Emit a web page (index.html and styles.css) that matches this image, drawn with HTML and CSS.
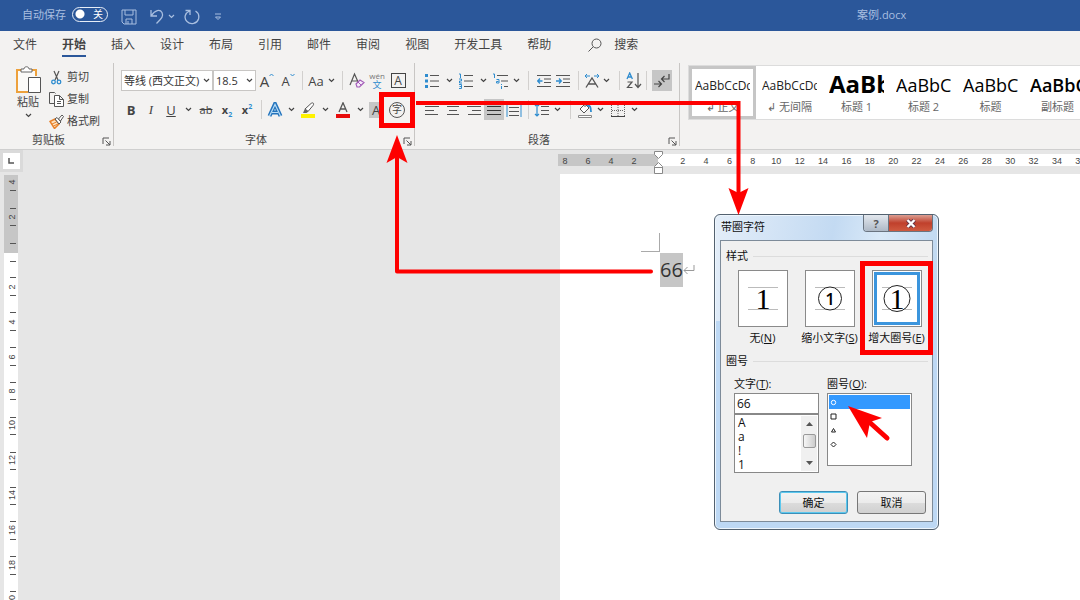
FILE: index.html
```html
<!DOCTYPE html>
<html lang="zh-CN">
<head>
<meta charset="utf-8">
<title>案例.docx</title>
<link rel="stylesheet" href="styles.css">
</head>
<body>
<svg class="defs" aria-hidden="true">
  <symbol id="chev" viewBox="0 0 7 5"><path d="M1 1l2.500 2.500L6 1" fill="none" stroke="currentColor" stroke-width="1.200"/></symbol>
  <symbol id="launch" viewBox="0 0 9 9"><path d="M1 7V1h6M3.500 3.500L8 8M8 4v4H4" fill="none" stroke="#555"/></symbol>
</svg>
<div class="app">
  <header class="titlebar">
    <label class="autosave">自动保存
      <span class="toggle"><input type="checkbox" aria-label="自动保存"><span class="toggle-text">关</span></span>
    </label>
    <button class="qa" aria-label="保存"><svg width="16" height="16" viewBox="0 0 16 16"><path d="M1 1h14v14H3l-2-2zM4 1v5h8V1M5 15v-5h6v5M7 12v3" fill="none" stroke="currentColor"/></svg></button>
    <button class="qa undo" aria-label="撤消"><svg width="15" height="16" viewBox="0 0 15 16"><path d="M1 1v6h6M1.500 6.500C5 1 10 0 12 3.500c2 4-1 6.500-5.500 11" fill="none" stroke="currentColor" stroke-width="1.300"/></svg></button>
    <svg class="chev" width="7" height="5"><use href="#chev"/></svg>
    <button class="qa redo" aria-label="重做"><svg width="16" height="16" viewBox="0 0 16 16"><path d="M1.500 1.500h4.500v4.500M5.500 2C1 4-.5 9 3 12.500c4 4 10 2 11.500-2.500 1-4-.5-6.500-3-8" fill="none" stroke="currentColor" stroke-width="1.300"/></svg></button>
    <button class="qa more" aria-label="自定义"><svg width="8" height="8" viewBox="0 0 8 8"><path d="M1 1h6M1.500 4L4 6.500 6.500 4z" fill="none" stroke="currentColor"/></svg></button>
    <h1 class="doc-title">案例.docx</h1>
  </header>

  <nav class="tabs">
    <a href="#">文件</a><a href="#" class="active">开始</a><a href="#">插入</a><a href="#">设计</a><a href="#">布局</a><a href="#">引用</a><a href="#">邮件</a><a href="#">审阅</a><a href="#">视图</a><a href="#">开发工具</a><a href="#">帮助</a>
    <a href="#" class="search"><svg width="14" height="14" viewBox="0 0 14 14"><circle cx="8.500" cy="5.500" r="4.500" fill="none" stroke="#555"/><path d="M5.300 8.700L.5 13.500" stroke="#555"/></svg>搜索</a>
  </nav>

  <div class="ribbon">
    <section class="group clipboard">
      <div class="clip-body">
        <button class="paste">
          <svg width="27" height="28" viewBox="0 0 27 28"><path d="M6 4H2v22h11M17 4h4v6" fill="none" stroke="#eda13c" stroke-width="2"/><path d="M3 5h17v6h-7v14H3z" fill="#fbfaf8"/><path d="M6 6V3h3c0-3 5-3 5 0h3v3z" fill="#fff" stroke="#666"/><path d="M13.500 11.500h12v15h-12z" fill="#fff" stroke="#555"/></svg>
          <span>粘贴</span>
          <svg class="chev" width="7" height="5"><use href="#chev"/></svg>
        </button>
        <div class="clip-list">
          <button><svg width="15" height="15" viewBox="0 0 15 15"><path d="M5 1l4 9M10 1L6 10" stroke="#555" stroke-width="1.200"/><circle cx="4.500" cy="12" r="1.800" fill="none" stroke="#2e8ccf" stroke-width="1.300"/><circle cx="10" cy="12" r="1.800" fill="none" stroke="#2e8ccf" stroke-width="1.300"/></svg>剪切</button>
          <button><svg width="15" height="15" viewBox="0 0 15 15"><path d="M5 11.500H.5v-11h5l1 1" fill="none" stroke="#555"/><path d="M5.500 3.500h5l4 4v7h-9zM10.500 3.500v4h4M8 9.500h4M8 11.500h4" fill="#fff" stroke="#555"/></svg>复制</button>
          <button><svg width="15" height="15" viewBox="0 0 15 15"><path d="M1 7.500l5-2.500 4 5-4.500 4.500z" fill="#fde2c2" stroke="#e8822a" stroke-width="1.500"/><path d="M3 10l4.500-2M4.500 12l4.500-2" stroke="#e8822a"/><path d="M6 5l2-1.500 4 4.500-2 2z" fill="#fff" stroke="#555"/><path d="M9.500 5l3.500-4 1.500 1.500L11.500 7z" fill="#fff" stroke="#555"/></svg>格式刷</button>
        </div>
      </div>
      <footer><span>剪贴板</span><button class="launch" aria-label="剪贴板设置"><svg width="9" height="9"><use href="#launch"/></svg></button></footer>
    </section>

    <section class="group font">
      <div class="row">
        <span class="combo w92"><select aria-label="字体"><option>等线 (西文正文)</option></select><svg width="7" height="5"><use href="#chev"/></svg></span>
        <span class="combo w43"><select aria-label="字号"><option>18.5</option></select><svg width="7" height="5"><use href="#chev"/></svg></span>
        <button class="w22" aria-label="增大字号"><span class="glyph big">A</span><svg class="hat" width="5" height="4" viewBox="0 0 5 4"><path d="M.5 3l2-2 2 2" fill="none" stroke="#2e8ccf"/></svg></button>
        <button class="w20" aria-label="减小字号"><span class="glyph">A</span><svg class="hat" width="5" height="4" viewBox="0 0 5 4"><path d="M.5 1l2 2 2-2" fill="none" stroke="#2e8ccf"/></svg></button>
        <i class="sep w8"></i>
        <button class="w20"><span class="glyph">Aa</span></button>
        <button class="w10" aria-label="更改大小写"><svg width="7" height="5"><use href="#chev"/></svg></button>
        <i class="sep w12"></i>
        <button class="w18" aria-label="清除格式"><svg width="16" height="17" viewBox="0 0 16 17"><path d="M1 13L5.500 2 10 12M2.500 9h6" fill="none" stroke="#555" stroke-width="1.200"/><path d="M7 12l4-4 4 2.500-4.500 4.500H8z" fill="#f7ecfa" stroke="#a25cb8" stroke-width="1.200"/><path d="M9 10l3 3" stroke="#a25cb8"/></svg></button>
        <button class="w22 pinyin"><span>wén</span><b>文</b></button>
        <button class="w20"><span class="boxed">A</span></button>
      </div>
      <div class="row">
        <button class="w20"><b class="glyph">B</b></button>
        <button class="w20"><em class="glyph">I</em></button>
        <button class="w20"><u class="glyph">U</u></button>
        <button class="w14" aria-label="下划线样式"><svg width="7" height="5"><use href="#chev"/></svg></button>
        <button class="w22"><s class="glyph small">ab</s></button>
        <button class="w20"><b class="glyph small">x<sub>2</sub></b></button>
        <button class="w20"><b class="glyph small">x<sup>2</sup></b></button>
        <i class="sep w8"></i>
        <button class="w20" aria-label="文本效果"><svg width="16" height="16" viewBox="0 0 16 16"><path d="M2.500 14L8 2l5.500 12M5 10.500h6" fill="none" stroke="#2474bd" stroke-width="4"/><path d="M2.500 14L8 2.500 13.500 14M5 10.500h6" fill="none" stroke="#b9dcf5" stroke-width="1.200"/></svg></button>
        <button class="w12" aria-label="更多文本效果"><svg width="7" height="5"><use href="#chev"/></svg></button>
        <button class="w22" aria-label="突出显示"><svg width="16" height="16" viewBox="0 0 16 16"><path d="M1 12h14v4H1z" fill="#fff200"/><path d="M5 7l6-5.500c2-1.500 3.500 0 2 2L8 9.500z" fill="#fff" stroke="#555"/><path d="M3 11l2-4.500L8.500 9.500 6.500 11z" fill="#666"/></svg></button>
        <button class="w12" aria-label="突出显示颜色"><svg width="7" height="5"><use href="#chev"/></svg></button>
        <button class="w24" aria-label="字体颜色"><svg width="16" height="16" viewBox="0 0 16 16"><path d="M1 12h14v4H1z" fill="#e80c0c"/><path d="M4 10L8 .8 12 10M5.500 7h5" fill="none" stroke="#555" stroke-width="1.300"/></svg></button>
        <button class="w10" aria-label="更多颜色"><svg width="7" height="5"><use href="#chev"/></svg></button>
        <button class="w22"><span class="shade">A</span></button>
        <button class="w20"><span class="ring">字</span></button>
      </div>
      <footer><span>字体</span><button class="launch" aria-label="字体设置"><svg width="9" height="9"><use href="#launch"/></svg></button></footer>
    </section>

    <section class="group para">
      <div class="row">
        <button class="w20" aria-label="项目符号"><svg width="16" height="16" viewBox="0 0 16 16"><path d="M1 1h3v3H1zM1 6.500h3v3H1zM1 12h3v3H1z" fill="#2e8ccf"/><path d="M6 2.500h9M6 8h9M6 13.500h9" stroke="#555"/></svg></button>
        <button class="w14" aria-label="项目符号库"><svg width="7" height="5"><use href="#chev"/></svg></button>
        <button class="w20" aria-label="编号"><svg width="16" height="16" viewBox="0 0 16 16"><path d="M1 1h1.500v4M1 6h2.500v2H1.500v2h2.500M1 11.500h2.500v4H1M1.500 13.500h2" fill="none" stroke="#2e8ccf"/><path d="M6 2.500h9M6 8h9M6 13.500h9" stroke="#555"/></svg></button>
        <button class="w14" aria-label="编号库"><svg width="7" height="5"><use href="#chev"/></svg></button>
        <button class="w22" aria-label="多级列表"><svg width="16" height="16" viewBox="0 0 16 16"><path d="M0 1h1.500v4M3.500 6.500h2.500v3.500H3.500V8.500h2M8.500 11v1M8.500 13v3" fill="none" stroke="#2e8ccf"/><path d="M4 2.500h11M8 8h7M11 13.500h4" stroke="#555"/></svg></button>
        <button class="w8" aria-label="列表库"><svg width="7" height="5"><use href="#chev"/></svg></button>
        <i class="sep w16"></i>
        <button class="w16" aria-label="减少缩进"><svg width="14" height="14" viewBox="0 0 14 14"><path d="M0 1.500h14M7 5h7M7 8.500h7M0 12.500h14" stroke="#555"/><path d="M5.500 7H1M3 4.500L.7 7 3 9.500" fill="none" stroke="#2e8ccf" stroke-width="1.300"/></svg></button>
        <button class="w22" aria-label="增加缩进"><svg width="14" height="14" viewBox="0 0 14 14"><path d="M0 1.500h14M7 5h7M7 8.500h7M0 12.500h14" stroke="#555"/><path d="M0 7h4.500M3 4.500L5.300 7 3 9.500" fill="none" stroke="#2e8ccf" stroke-width="1.300"/></svg></button>
        <i class="sep w8"></i>
        <button class="w20" aria-label="中文版式"><svg width="16" height="16" viewBox="0 0 16 16"><path d="M2 14.500L8 5l6 9.500M4.500 11h7" fill="none" stroke="#555" stroke-width="1.300"/><path d="M6 3H1M3 1L1 3l2 2M10 3h5M13 1l2 2-2 2" fill="none" stroke="#2e8ccf"/></svg></button>
        <button class="w8" aria-label="更多版式"><svg width="7" height="5"><use href="#chev"/></svg></button>
        <i class="sep w18"></i>
        <button class="w12" aria-label="排序"><svg width="16" height="17" viewBox="0 0 16 17"><path d="M1 7l2.700-6 2.700 6M2 5h3.500" fill="none" stroke="#2e8ccf" stroke-width="1.300"/><path d="M1.500 10h4.500L1.500 15.500h5M12 1v14M9 12l3 3.500 3-3.500" fill="none" stroke="#555" stroke-width="1.200"/></svg></button>
        <i class="sep w12"></i>
        <button class="w20 on" aria-label="显示编辑标记"><svg width="16" height="16" viewBox="0 0 16 16"><path d="M15 1v5H8M10.500 3L7.500 6l3 3M0 11h7M4.500 8l3 3-3 3" fill="none" stroke="#444" stroke-width="1.200"/></svg></button>
      </div>
      <div class="row">
        <button class="w20" aria-label="左对齐"><svg width="14" height="14" viewBox="0 0 14 14"><path d="M0 3.500h14M0 7.500h9M0 11.500h13" stroke="#555"/></svg></button>
        <button class="w22" aria-label="居中"><svg width="14" height="14" viewBox="0 0 14 14"><path d="M1 3.500h12M3 7.500h8M1 11.500h12" stroke="#555"/></svg></button>
        <button class="w20" aria-label="右对齐"><svg width="14" height="14" viewBox="0 0 14 14"><path d="M0 3.500h14M5 7.500h9M1 11.500h13" stroke="#555"/></svg></button>
        <button class="w20 on" aria-label="两端对齐"><svg width="14" height="14" viewBox="0 0 14 14"><path d="M0 3.500h14M0 7.500h14M0 11.500h14" stroke="#333"/></svg></button>
        <button class="w20" aria-label="分散对齐"><svg width="16" height="14" viewBox="0 0 16 14"><path d="M1 0v14M15 0v14" stroke="#2e8ccf"/><path d="M3 4.500h10M3 8.500h10M3 12.500h10M3 1.500h10" stroke="#555"/></svg></button>
        <i class="sep w8"></i>
        <button class="w20" aria-label="行距"><svg width="16" height="14" viewBox="0 0 16 14"><path d="M3 1v12M1 3l2-2 2 2M1 11l2 2 2-2" fill="none" stroke="#2e8ccf" stroke-width="1.200"/><path d="M7 3.500h8M7 7.500h8M7 11.500h8" stroke="#555"/></svg></button>
        <button class="w10" aria-label="行距选项"><svg width="7" height="5"><use href="#chev"/></svg></button>
        <i class="sep w16"></i>
        <button class="w14" aria-label="底纹"><svg width="16" height="16" viewBox="0 0 16 16"><path d="M1.500 13.500h13v2h-13z" fill="#fff" stroke="#888"/><path d="M3 7l5-5 4 4-5 5z" fill="#fff" stroke="#555"/><path d="M8 5V1" stroke="#555"/><path d="M10 4c3-1 4 1 4 6" fill="none" stroke="#2e8ccf" stroke-width="1.800"/></svg></button>
        <button class="w16" aria-label="底纹颜色"><svg width="7" height="5"><use href="#chev"/></svg></button>
        <button class="w20" aria-label="边框"><svg width="14" height="14" viewBox="0 0 14 14"><path d="M.5 0v13M13.500 0v13M0 1.500h14M7 0v13M1 7.500h12" stroke="#666" stroke-dasharray="1 1"/><path d="M0 13.500h14" stroke="#444"/></svg></button>
        <button class="w12" aria-label="边框选项"><svg width="7" height="5"><use href="#chev"/></svg></button>
      </div>
      <footer><span>段落</span><button class="launch" aria-label="段落设置"><svg width="9" height="9"><use href="#launch"/></svg></button></footer>
    </section>

    <section class="gallery">
      <button class="style selected"><span class="sample">AaBbCcDd</span><span class="name">↲ 正文</span></button>
      <button class="style"><span class="sample">AaBbCcDd</span><span class="name">↲ 无间隔</span></button>
      <button class="style"><span class="sample h1">AaBb</span><span class="name">标题 1</span></button>
      <button class="style"><span class="sample h2">AaBbC</span><span class="name">标题 2</span></button>
      <button class="style"><span class="sample h2">AaBbC</span><span class="name">标题</span></button>
      <button class="style"><span class="sample h2 strong">AaBbC</span><span class="name">副标题</span></button>
    </section>
  </div>

  <main class="workspace">
    <div class="left-rail">
      <button class="tabstop" aria-label="制表符"><svg width="7" height="6" viewBox="0 0 7 6"><path d="M1 0v5h5" fill="none" stroke="#555" stroke-width="1.500"/></svg></button>
      <svg class="vruler" width="14" height="426" viewBox="4 175 14 426">
        <path d="M4 175h14v426H4z" fill="#fff"/><path d="M4 175h14v78H4z" fill="#c6c6c6"/>
        <path d="M10 190.500h6M10 208.500h6M10 225.500h6M10 243.500h6M10 261.500h6M10 277.500h6M10 295.500h6M10 312.500h6M10 330.500h6M10 347.500h6M10 365.500h6M10 382.500h6M10 399.500h6M10 417.500h6M10 434.500h6M10 452.500h6M10 469.500h6M10 487.500h6M10 504.500h6M10 521.500h6M10 539.500h6M10 556.500h6M10 574.500h6M10 591.500h6" stroke="#555"/>
        <g class="vnum">
          <text transform="translate(15 182) rotate(-90)">4</text><text transform="translate(15 217) rotate(-90)">2</text><text transform="translate(15 287) rotate(-90)">2</text><text transform="translate(15 322) rotate(-90)">4</text><text transform="translate(15 357) rotate(-90)">6</text><text transform="translate(15 391) rotate(-90)">8</text><text transform="translate(15 425) rotate(-90)">10</text><text transform="translate(15 460) rotate(-90)">12</text><text transform="translate(15 495) rotate(-90)">14</text><text transform="translate(15 530) rotate(-90)">16</text><text transform="translate(15 565) rotate(-90)">18</text><text transform="translate(15 600) rotate(-90)">20</text>
        </g>
      </svg>
    </div>
    <div class="canvas">
      <div class="hruler">
        <ol class="neg"><li>8</li><li>6</li><li>4</li><li>2</li></ol>
        <ol class="pos"><li>2</li><li>4</li><li>6</li><li>8</li><li>10</li><li>12</li><li>14</li><li>16</li><li>18</li><li>20</li><li>22</li><li>24</li><li>26</li><li>28</li><li>30</li><li>32</li><li>34</li><li>36</li></ol>
        <svg class="indent" width="9" height="24" viewBox="0 0 9 24"><path d="M.5.500h8v3l-4 4-4-4zM4.500 11.500l4 4v7h-8v-7zM.5 16.500h8" fill="#fff" stroke="#888"/></svg>
      </div>
      <article class="page">
        <p><span class="sel">66</span><svg width="12" height="12" viewBox="0 0 12 12"><path d="M11 1v5.500H1M4.500 3L1 6.500 4.500 10" fill="none" stroke="#999"/></svg></p>
        <svg class="crop" width="20" height="20" viewBox="0 0 20 20"><path d="M18.500 0v19M0 18.500h19" stroke="#aaa"/></svg>
      </article>
    </div>
  </main>

  <div class="dialog" role="dialog" aria-labelledby="dlg-title">
    <div class="dlg-bar"><h2 id="dlg-title">带圈字符</h2><div class="dlg-ctl"><button class="help">?</button><button class="close" aria-label="关闭"><svg width="12" height="9" viewBox="0 0 12 9"><path d="M2.500 1l7 7M9.500 1l-7 7" stroke="#634" stroke-width="4"/><path d="M2.500 1l7 7M9.500 1l-7 7" stroke="#fff" stroke-width="2.400"/></svg></button></div></div>
    <form class="dlg-body">
      <div class="head">样式</div>
      <div class="choices">
        <label><input type="radio" name="st"><span class="tile"><svg width="48" height="55" viewBox="0 0 48 55"><path d="M9 16.500h30M9 38.500h30" stroke="#bbb"/><text x="24" y="38" class="one serif">1</text></svg></span><span>无(<u>N</u>)</span></label>
        <label><input type="radio" name="st"><span class="tile"><svg width="48" height="55" viewBox="0 0 48 55"><path d="M9 16.500h30M9 38.500h30" stroke="#bbb"/><circle cx="24" cy="27.500" r="11.500" fill="#fff" stroke="#222"/><text x="24" y="34" class="one mid">1</text></svg></span><span>缩小文字(<u>S</u>)</span></label>
        <label><input type="radio" name="st" checked><span class="tile"><svg width="48" height="55" viewBox="0 0 48 55"><path d="M9 16.500h30M9 38.500h30" stroke="#bbb"/><circle cx="24" cy="27.500" r="13" fill="#fff" stroke="#222"/><text x="24" y="38" class="one serif">1</text></svg></span><span>增大圈号(<u>E</u>)</span></label>
      </div>
      <div class="head">圈号</div>
      <div class="lists">
        <div class="col">
          <label for="chars">文字(<u>T</u>):</label>
          <input id="chars" type="text" value="66">
          <div class="listwrap">
            <ul role="listbox" aria-label="文字"><li>A</li><li>a</li><li>!</li><li>1</li></ul>
            <div class="scroll"><svg width="7" height="4" viewBox="0 0 7 4"><path d="M0 4l3.500-4L7 4z" fill="#555"/></svg><span class="thumb"></span><svg width="7" height="4" viewBox="0 0 7 4"><path d="M0 0l3.500 4L7 0z" fill="#555"/></svg></div>
          </div>
        </div>
        <div class="col">
          <span id="ringlabel">圈号(<u>O</u>):</span>
          <ul class="rings" role="listbox" aria-labelledby="ringlabel">
            <li class="cur"><svg width="7" height="7" viewBox="0 0 7 7"><circle cx="3.500" cy="3.500" r="2.200"/></svg></li>
            <li><svg width="7" height="7" viewBox="0 0 7 7"><path d="M1 1h5v5H1z"/></svg></li>
            <li><svg width="7" height="7" viewBox="0 0 7 7"><path d="M3.500 1.500l2 3.500h-4z"/></svg></li>
            <li><svg width="7" height="7" viewBox="0 0 7 7"><path d="M3.500 1L6 3.500 3.500 6 1 3.500z"/></svg></li>
          </ul>
        </div>
      </div>
      <div class="actions"><button type="button" class="default">确定</button><button type="button">取消</button></div>
    </form>
  </div>

  <svg class="marks" width="1080" height="600" viewBox="0 0 1080 600" aria-hidden="true">
    <g fill="none" stroke="#fe0000" stroke-width="4">
      <path d="M381.500 94.500h31v31h-31z" stroke-width="5"/>
      <path d="M862.500 263.500h68v89h-68z" stroke-width="5"/>
      <path d="M416 103h322.500v90"/>
      <path d="M651 271.500H397V158" stroke-linecap="round" stroke-linejoin="round"/>
      <path d="M887 438l-20-18" stroke-width="5" stroke-linecap="round"/>
    </g>
    <path d="M738.500 215l-10-27 10 5 10-5zM397 135l-10.500 28L397 157l10.500 6zM848 406l34 12-12 4-3 16z" fill="#fe0000"/>
  </svg>
</div>
</body>
</html>
```
FILE: styles.css
```css
* { box-sizing: border-box; }
body { margin: 0; background: #e6e6e6; color: #444; font: 11px/14px "Open Sans", "Noto Sans CJK SC", sans-serif; }
button, input, select { font: inherit; color: inherit; margin: 0; padding: 0; }
button { background: none; border: 0; white-space: nowrap; }
ul, ol { list-style: none; margin: 0; padding: 0; }
h1, h2, p { margin: 0; font: inherit; }
svg { display: block; flex: none; }
.defs { position: absolute; width: 0; height: 0; }
.app { position: relative; display: flex; flex-direction: column; height: 100vh; overflow: hidden; }

.titlebar { display: flex; align-items: center; flex: none; height: 31px; padding: 0 0 2px 22px; background: #2b579a; color: #a9bfe0; }
.autosave { display: flex; align-items: center; gap: 6px; }
.toggle { position: relative; }
.toggle input { appearance: none; display: block; width: 36px; height: 15px; border: 1px solid #e6edf7; border-radius: 8px; background: radial-gradient(circle at 7px 6px, #fff 4px, transparent 5px); }
.toggle-text { position: absolute; top: 0; right: 5px; font-size: 10px; color: #fff; }
.qa { margin: 4px 0 0 13px; }
.titlebar .chev { margin: 3px 0 0 3px; }
.qa.redo { margin-left: 9px; }
.qa.more { margin-left: 14px; }
.doc-title { margin-left: 635px; }

.tabs { display: flex; flex: none; gap: 25px; height: 30px; padding: 5px 0 0 13px; background: #f3f2f1; font-size: 12px; line-height: 18px; }
.tabs a { color: #444; text-decoration: none; white-space: nowrap; height: 21px; }
.tabs .active { font-weight: 700; border-bottom: 2px solid #2b579a; }
.tabs .search { display: flex; align-items: center; gap: 12px; margin-left: 12px; height: 18px; }

.ribbon { display: flex; flex: none; height: 89px; background: #f3f2f1; border-bottom: 1px solid #cfcfcf; overflow: hidden; }
.group { display: flex; flex-direction: column; flex: none; gap: 8px; margin: 2px 0 3px; padding: 7px 0 0 7px; border-right: 1px solid #c8c6c4; }
.clipboard { width: 114px; padding: 3px 0 0; gap: 0; }
.font { width: 301px; }
.para { width: 265px; }
.row { display: flex; align-items: center; height: 21px; }
.row > button { display: flex; align-items: center; justify-content: center; height: 21px; flex: none; }
.row > .on { background: #c6c6c6; }
.group footer { display: flex; align-items: flex-end; margin: auto 0 0 -7px; height: 12px; line-height: 12px; }
.clipboard footer { margin-left: 0; }
.group footer span { flex: 1; text-align: center; }
.launch { display: flex; justify-content: flex-end; width: 16px; padding-right: 2px; }
.w8 { width: 8px; } .w10 { width: 10px; } .w12 { width: 12px; } .w14 { width: 14px; } .w16 { width: 16px; }
.w18 { width: 18px; } .w20 { width: 20px; } .w22 { width: 22px; } .w24 { width: 24px; }
.w43 { width: 43px; } .w92 { width: 92px; }
.sep { flex: none; height: 19px; background: linear-gradient(#d2d0ce, #d2d0ce) center / 1px 100% no-repeat; }

.clip-body { display: flex; gap: 7px; padding-left: 14px; }
.paste { display: flex; flex-direction: column; align-items: center; width: 28px; }
.paste span { margin: 1px 0 4px; }
.clip-list { display: flex; flex-direction: column; }
.clip-list button { display: flex; align-items: center; gap: 3px; height: 22px; }

.combo { position: relative; flex: none; }
.combo select { appearance: none; display: block; width: 100%; height: 21px; padding: 0 11px 0 2px; border: 1px solid #c8c6c4; border-radius: 0; background: #fff; color: #333; overflow: hidden; }
.combo svg { position: absolute; right: 3px; top: 8px; }
.glyph { font-size: 13px; line-height: 16px; }
.glyph.big { font-size: 15px; }
.glyph.small { font-size: 11px; }
em.glyph { font-family: "Liberation Serif", serif; }
.hat { align-self: flex-start; margin-top: 3px; }
.glyph sub, .glyph sup { font-size: 7px; line-height: 0; color: #2e8ccf; }
.row > .pinyin { flex-direction: column; font-size: 8px; line-height: 8px; color: #777; }
.pinyin b { font-size: 9px; line-height: 10px; font-weight: 400; color: #2e8ccf; }
.boxed { width: 15px; height: 15px; border: 1px solid #444; line-height: 13px; font-size: 12px; }
.shade { width: 15px; height: 16px; background: #c6c6c6; font-size: 13px; line-height: 16px; }
.ring { width: 16px; height: 16px; border: 1px solid #555; border-radius: 50%; font-size: 10px; line-height: 13px; }

.gallery { display: grid; grid-auto-flow: column; grid-auto-columns: 67px; flex: 1; min-width: 0; height: 55px; margin: 4px 0 0 8px; border: 1px solid #dcdcdc; border-right: 0; background: #fff; overflow: hidden; }
.style { display: flex; flex-direction: column; padding: 5px 6px 0 3px; border: 3px solid transparent; }
.style.selected { border-color: #c6c6c6; }
.sample { height: 26px; width: 55px; overflow: hidden; text-align: left; font: 12px/24px "Open Sans", sans-serif; color: #222; }
.h1 { font-size: 24px; font-weight: 700; line-height: 20px; color: #000; }
.h2 { font-size: 18px; line-height: 22px; color: #000; }
.strong { font-weight: 600; }
.name { width: 55px; text-align: center; color: #666; }

.workspace { display: flex; flex: 1; min-height: 0; }
.left-rail { flex: none; width: 23px; }
.tabstop { display: flex; align-items: center; justify-content: center; width: 23px; height: 22px; background: #fff; border: 3px solid #dadada; }
.vruler { margin: 3px 0 0 4px; }
.vnum, .hruler { font: 9px/14px "Liberation Sans", sans-serif; fill: #444; }
.vnum { text-anchor: middle; }
.canvas { display: flex; flex-direction: column; flex: 1; min-width: 0; padding: 4px 0 0 535px; }
.hruler { position: relative; display: flex; flex: none; height: 12px; background: #fff; }
.hruler ol { display: grid; grid-auto-flow: column; text-align: center; flex: none; }
.hruler .neg { width: 100px; padding-right: 8px; grid-auto-columns: 1fr; background: #c6c6c6; }
.hruler .neg li { margin-left: -9px; }
.hruler .pos { width: 434px; margin-right: -12px; padding-left: 13px; grid-auto-columns: 1fr; }
.indent { position: absolute; left: 96px; top: -3px; }
.page { position: relative; flex: 1; margin: 8px 0 0 2px; padding: 79px 0 0 100px; background: #fff; }
.page p { display: flex; align-items: center; }
.sel { background: #c6c6c6; color: #333; font: 20px/34px "Open Sans", sans-serif; }
.crop { position: absolute; left: 81px; top: 59px; }

.dialog { position: absolute; left: 714px; top: 214px; width: 225px; height: 316px; padding: 0 5px 7px; border: 1px solid #53616f; border-radius: 6px; background: linear-gradient(100deg, #e4eef9, #c3daf2 50%, #d9e9f8 70%, #bcd6f0) top / 100% 106px no-repeat, #bdd8f4; color: #111; display: flex; flex-direction: column; box-shadow: inset 0 0 0 1px #eef6fd; }
.dlg-bar { display: flex; justify-content: space-between; height: 25px; padding-left: 1px; line-height: 24px; }
.dlg-ctl { display: flex; height: 17px; border: 1px solid #6a7480; border-top: 0; border-radius: 0 0 4px 4px; overflow: hidden; }
.help { width: 25px; background: linear-gradient(#e3e8ee, #aeb9c6); border-right: 1px solid #6a7480; color: #555; font-weight: 700; line-height: 15px; }
.close { display: flex; align-items: center; justify-content: center; width: 43px; background: linear-gradient(#dc9e92, #c0402c 50%, #cf5a40); }
.dlg-body { flex: 1; padding: 8px 4px 0 5px; background: #f0f0f0; border: 1px solid #7d8b99; }
.head { display: flex; align-items: center; gap: 5px; height: 14px; }
.head::after { content: ""; flex: 1; height: 1px; background: #dcdcdc; }
.choices { display: grid; grid-template-columns: repeat(3, 67px); margin: 7px -6px 8px 3px; }
.choices label { display: flex; flex-direction: column; align-items: center; gap: 4px; padding-bottom: 1px; white-space: nowrap; }
.choices input { position: absolute; opacity: 0; }
.tile { width: 50px; height: 57px; border: 1px solid #8a8a8a; background: #fff; overflow: hidden; }
input:checked + .tile { outline: 3px solid #3b95dd; outline-offset: -5px; }
.one { text-anchor: middle; fill: #000; }
.serif { font: 30px "Liberation Serif", serif; }
.mid { font: 600 17px "Open Sans", sans-serif; }
.lists { display: grid; grid-template-columns: 85px 85px; gap: 8px; margin: 8px 0 0 8px; }
.col { display: flex; flex-direction: column; align-items: stretch; }
.col > label, .col > span { height: 17px; line-height: 15px; }
.col input { width: 100%; height: 21px; padding: 0 2px; border: 1px solid #888; background: #fff; font-size: 12px; }
.listwrap { display: flex; justify-content: space-between; height: 59px; padding: 1px 1px 1px 3px; border: 1px solid #888; background: #fff; }
.listwrap li { height: 14px; font-size: 12px; line-height: 14px; }
.scroll { display: flex; flex-direction: column; align-items: center; justify-content: space-between; width: 16px; padding: 6px 0; background: #f0f0f0; }
.thumb { width: 13px; height: 14px; margin-bottom: 5px; border: 1px solid #999; border-radius: 2px; background: linear-gradient(90deg, #f6f6f6, #ccc); }
.rings { height: 73px; padding: 1px; border: 1px solid #888; background: #fff; }
.rings li { display: flex; align-items: center; height: 14px; padding-left: 1px; }
.rings svg { fill: none; stroke: #222; }
.rings .cur { background: #3399ff; }
.rings .cur svg { stroke: #fff; }
.actions { display: flex; justify-content: flex-end; gap: 9px; margin: 18px 2px 0 0; }
.actions button { width: 69px; height: 23px; border: 1px solid #777; border-radius: 3px; background: linear-gradient(#f3f3f3, #ebebeb 50%, #dcdcdc 50%, #d0d0d0); }
.actions .default { border-color: #3c8fb8; box-shadow: inset 0 0 0 1px #5cc8ee; }

.marks { position: absolute; left: 0; top: 0; pointer-events: none; }
```
